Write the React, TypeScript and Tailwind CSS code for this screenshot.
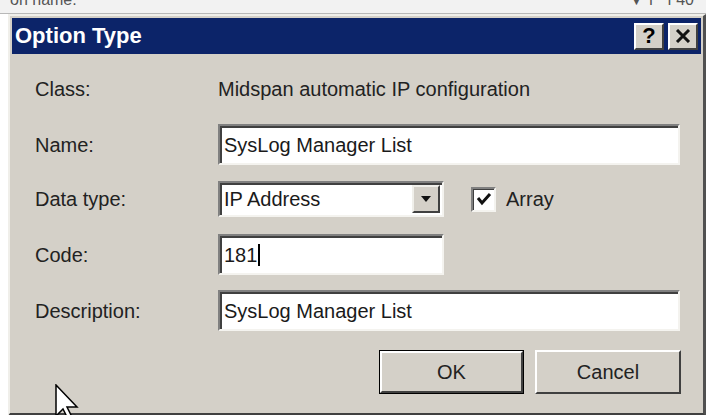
import React from 'react'

const font = { fontFamily: '"Liberation Sans", Arial, sans-serif' }

function Sunken({ className, children }: { className?: string; children?: React.ReactNode }) {
  return (
    <div
      className={
        'flex items-center bg-white border-2 border-t-[#808080] border-l-[#808080] border-b-[#f4f3ef] border-r-[#f4f3ef] shadow-[inset_2px_2px_0_#404040] pl-[4px] text-[20px] text-[#1a1a1a] ' +
        (className ?? '')
      }
    >
      {children}
    </div>
  )
}

function TitleButton({ children }: { children: React.ReactNode }) {
  return (
    <div className="w-[30px] h-[27px] flex items-center justify-center bg-[#d4d0c8] border-2 border-t-white border-l-white border-b-[#404040] border-r-[#404040] text-[22px] font-bold text-black leading-none">
      {children}
    </div>
  )
}

function Row({ label, children, className }: { label: string; children: React.ReactNode; className?: string }) {
  return (
    <div className={'flex items-center ' + (className ?? '')}>
      <div className="w-[183px] shrink-0 text-[20px] text-[#222]">{label}</div>
      {children}
    </div>
  )
}

export default function App() {
  return (
    <div className="w-[706px] h-[415px] bg-white overflow-hidden relative" style={font}>
      {/* window behind */}
      <div className="h-[14px] overflow-hidden relative border-b border-[#b8b8b8] bg-[#f2f2f2]">
        <div className="flex justify-between pl-[10px] pr-[12px] -mt-[8px] text-[16px] text-[#555] leading-none">
          <span>on name:</span>
          <span className="flex gap-[14px]"><span>▼ ı</span><span>ı 40</span></span>
        </div>
      </div>

      {/* dialog */}
      <div className="ml-[8px] w-[698px] h-[402px] bg-[#d4d0c8] border-l-2 border-t-2 border-l-[#f0efea] border-t-[#f0efea] border-r-[3px] border-b-[3px] border-r-[#505050] border-b-[#404040] p-[2px] flex flex-col">
        {/* title bar */}
        <div className="h-[36px] bg-[#0c2469] flex items-center justify-between pl-[3px] pr-[3px]">
          <span className="text-white font-bold text-[22px] leading-none">Option Type</span>
          <div className="flex gap-[4px]">
            <TitleButton>?</TitleButton>
            <TitleButton>
              <svg width="16" height="14" viewBox="0 0 16 14">
                <path d="M2 1 L14 13 M14 1 L2 13" stroke="#111" strokeWidth="3" />
              </svg>
            </TitleButton>
          </div>
        </div>

        {/* body */}
        <div className="flex flex-col pl-[23px] pt-[16px]">
          <Row label="Class:" className="h-[38px]">
            <span className="text-[20px] text-[#222]">Midspan automatic IP configuration</span>
          </Row>

          <Row label="Name:" className="mt-[16px]">
            <Sunken className="w-[462px] h-[41px]">SysLog Manager List</Sunken>
          </Row>

          <Row label="Data type:" className="mt-[16px]">
            <Sunken className="w-[226px] h-[36px] pr-[2px] justify-between">
              <span>IP Address</span>
              <div className="w-[28px] h-[28px] flex items-center justify-center bg-[#d4d0c8] border-2 border-t-[#f0efea] border-l-[#f0efea] border-b-[#404040] border-r-[#404040]">
                <svg width="10" height="6" viewBox="0 0 10 6">
                  <path d="M0 0 H10 L5 6 Z" fill="#111" />
                </svg>
              </div>
            </Sunken>
            <div className="ml-[27px] w-[25px] h-[25px] bg-white border-2 border-t-[#808080] border-l-[#808080] border-b-[#f4f3ef] border-r-[#f4f3ef] shadow-[inset_1px_1px_0_#404040] flex items-center justify-center">
              <svg width="16" height="14" viewBox="0 0 16 14">
                <path d="M2 6 L6 11 L14 2" stroke="#111" strokeWidth="3" fill="none" />
              </svg>
            </div>
            <span className="ml-[10px] text-[20px] text-[#222]">Array</span>
          </Row>

          <Row label="Code:" className="mt-[17px]">
            <Sunken className="w-[226px] h-[41px]">
              181<span className="inline-block w-[2px] h-[22px] bg-black ml-[1px]" />
            </Sunken>
          </Row>

          <Row label="Description:" className="mt-[15px]">
            <Sunken className="w-[462px] h-[41px]">SysLog Manager List</Sunken>
          </Row>

          <div className="flex justify-end gap-[11px] mt-[19px] pr-[20px]">
            <div className="border border-black">
              <div className="w-[143px] h-[42px] flex items-center justify-center border-2 border-t-white border-l-white border-b-[#404040] border-r-[#404040] text-[20px] text-[#222]">
                OK
              </div>
            </div>
            <div className="w-[146px] h-[44px] flex items-center justify-center border-2 border-t-white border-l-white border-b-[#404040] border-r-[#404040] text-[20px] text-[#222]">
              Cancel
            </div>
          </div>
        </div>
      </div>

      {/* mouse pointer */}
      <svg className="absolute left-[55px] top-[384px]" width="26" height="36" viewBox="0 0 26 36">
        <path d="M1 1 L1 32 L8 25 L13 35 L17 33 L12 23 L22 23 Z" fill="white" stroke="black" strokeWidth="1.5" />
      </svg>
    </div>
  )
}
